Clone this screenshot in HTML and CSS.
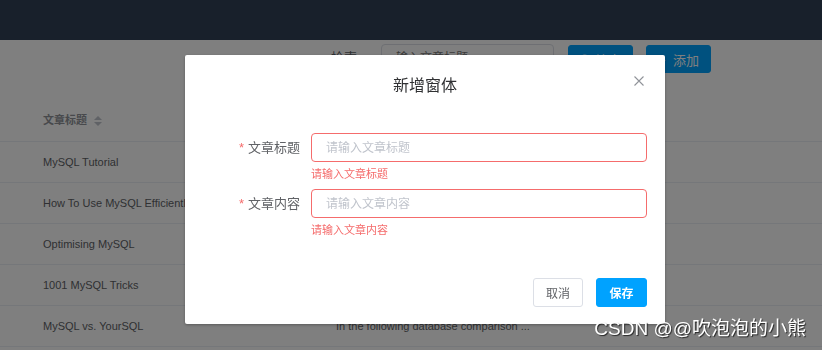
FILE: index.html
```html
<!DOCTYPE html>
<html lang="zh-CN">
<head>
    <meta charset="UTF-8">
    <title>文章管理</title>
    <link rel="stylesheet" href="styles.css">
</head>
<body>
    <div class="navbar"></div>

    <div class="toolbar">
        <span class="search-label">检索</span>
        <input type="text" class="search-input" placeholder="输入文章标题">
        <button class="btn btn-primary btn-tool">
            <svg class="icon" viewBox="0 0 12 12" width="11" height="11"><circle cx="5" cy="5" r="3.8" fill="none" stroke="#fff" stroke-width="1.3"/><line x1="7.8" y1="7.8" x2="11" y2="11" stroke="#fff" stroke-width="1.3"/></svg>
            检索
        </button>
        <button class="btn btn-primary btn-tool">+&nbsp; 添加</button>
    </div>

    <div class="table">
        <div class="row head">
            <div class="cell">文章标题
                <span class="sort"><i class="up"></i><i class="down"></i></span>
            </div>
            <div class="cell">文章内容</div>
        </div>
        <div class="row"><div class="cell">MySQL Tutorial</div><div class="cell">DBMS stands for DataBase ...</div></div>
        <div class="row"><div class="cell">How To Use MySQL Efficiently</div><div class="cell">After you went through a ...</div></div>
        <div class="row"><div class="cell">Optimising MySQL</div><div class="cell">In this tutorial we will show ...</div></div>
        <div class="row"><div class="cell">1001 MySQL Tricks</div><div class="cell">1. Never run mysqld as root. 2. ...</div></div>
        <div class="row"><div class="cell">MySQL vs. YourSQL</div><div class="cell">In the following database comparison ...</div></div>
    </div>

    <!-- Dialog with modal mask -->
    <div class="overlay">
        <div class="dialog">
            <div class="dialog-header">
                <span class="dialog-title">新增窗体</span>
                <svg class="dialog-close" viewBox="0 0 10 10" width="10" height="10"><path d="M0.5 0.5 L9.5 9.5 M9.5 0.5 L0.5 9.5" stroke="#909399" stroke-width="1.1"/></svg>
            </div>
            <div class="dialog-body">
                <div class="form-item">
                    <label class="form-label"><span class="required">*</span>文章标题</label>
                    <div class="form-content">
                        <input type="text" class="form-input is-error" placeholder="请输入文章标题">
                        <div class="form-error">请输入文章标题</div>
                    </div>
                </div>
                <div class="form-item">
                    <label class="form-label"><span class="required">*</span>文章内容</label>
                    <div class="form-content">
                        <input type="text" class="form-input is-error" placeholder="请输入文章内容">
                        <div class="form-error">请输入文章内容</div>
                    </div>
                </div>
            </div>
            <div class="dialog-footer">
                <button class="btn btn-default">取消</button>
                <button class="btn btn-primary btn-save">保存</button>
            </div>
        </div>
        <div class="watermark">CSDN @@吹泡泡的小熊</div>
    </div>
</body>
</html>
```

FILE: styles.css
```css
/* Page */
body {
    margin: 0;
    padding: 0;
    background-color: #fff;
    color: #606266;
    font-family: "Liberation Sans", "Noto Sans CJK SC", sans-serif;
    font-size: 12px;
    overflow: hidden;
}

/* Top bar */
.navbar {
    height: 40px;
    background-color: #304156;
}

/* Search toolbar */
.toolbar {
    display: flex;
    align-items: flex-start;
    justify-content: flex-end;
    height: 52px;
    padding: 4px 111px 0 0;
}

.search-label {
    line-height: 28px;
    font-size: 13px;
    margin-right: 24px;
    color: #606266;
}

.search-input {
    box-sizing: border-box;
    width: 173px;
    height: 28px;
    padding: 0 14px;
    border: 1px solid #dcdfe6;
    border-radius: 4px;
    font-family: inherit;
    font-size: 12px;
    margin-right: 14px;
}

.btn {
    box-sizing: border-box;
    height: 29px;
    padding: 0;
    border-radius: 3px;
    font-family: inherit;
    font-size: 12px;
    cursor: pointer;
}

.btn-primary {
    border: 1px solid #00a2ff;
    background-color: #00a2ff;
    color: #fff;
}

.btn-tool {
    width: 65px;
    height: 28px;
    margin-top: 1px;
    margin-left: 13px;
    font-size: 13px;
    display: inline-flex;
    align-items: center;
    justify-content: center;
    gap: 4px;
}

.btn-tool:first-of-type {
    margin-left: 0;
}

/* Table */
.row {
    display: grid;
    grid-template-columns: 336px 1fr;
    height: 40px;
    border-bottom: 1px solid #ebeef5;
    align-items: center;
}

.row.head {
    height: 45px;
    color: #909399;
    font-weight: bold;
}

.cell {
    padding-left: 43px;
    white-space: nowrap;
    font-size: 11px;
}

.cell + .cell {
    padding-left: 0;
}

.sort {
    display: inline-flex;
    flex-direction: column;
    gap: 2px;
    margin-left: 4px;
    vertical-align: middle;
}

.sort i {
    width: 0;
    height: 0;
    border-left: 4px solid transparent;
    border-right: 4px solid transparent;
}

.sort .up {
    border-bottom: 4px solid #c0c4cc;
}

.sort .down {
    border-top: 4px solid #c0c4cc;
}

/* Modal mask */
.overlay {
    position: fixed;
    top: 0;
    left: 0;
    right: 0;
    bottom: 0;
    background-color: rgba(0, 0, 0, 0.5);
}

/* Dialog */
.dialog {
    position: relative;
    width: 480px;
    margin: 55px 0 0 185px;
    background-color: #fff;
    border-radius: 2px;
    box-shadow: 0 1px 3px rgba(0, 0, 0, 0.3);
}

.dialog-header {
    padding: 17px 20px 10px;
    text-align: center;
}

.dialog-title {
    font-family: "Noto Sans CJK SC", sans-serif;
    font-size: 16px;
    line-height: 24px;
    color: #303133;
}

.dialog-close {
    position: absolute;
    top: 21px;
    right: 21px;
}

.dialog-body {
    padding: 27px 18px 0 26px;
}

.form-item {
    display: flex;
    height: 56px;
}

.form-label {
    width: 100px;
    box-sizing: border-box;
    padding-right: 11px;
    text-align: right;
    line-height: 29px;
    font-size: 13px;
    color: #606266;
}

.required {
    color: #f56c6c;
    margin-right: 4px;
}

.form-content {
    flex: 1;
}

.form-input {
    display: block;
    box-sizing: border-box;
    width: 100%;
    height: 29px;
    padding: 0 14px;
    border: 1px solid #dcdfe6;
    border-radius: 4px;
    font-family: inherit;
    font-size: 12px;
    color: #606266;
    outline: none;
}

.form-input::placeholder {
    color: #c0c4cc;
}

.form-input.is-error {
    border-color: #f56c6c;
}

.form-error {
    padding-top: 6px;
    line-height: 12px;
    font-size: 11px;
    color: #f56c6c;
}

.dialog-footer {
    display: flex;
    justify-content: flex-end;
    gap: 13px;
    padding: 33px 18px 17px 0;
}

.btn-default {
    width: 50px;
    border: 1px solid #dcdfe6;
    background-color: #fff;
    color: #606266;
}

.btn-save {
    width: 51px;
    font-weight: bold;
}

/* Watermark */
.watermark {
    position: absolute;
    right: 16px;
    bottom: 10px;
    font-size: 19px;
    color: #fff;
    text-shadow: 1px 1px 1px rgba(0, 0, 0, 0.7);
}
```
